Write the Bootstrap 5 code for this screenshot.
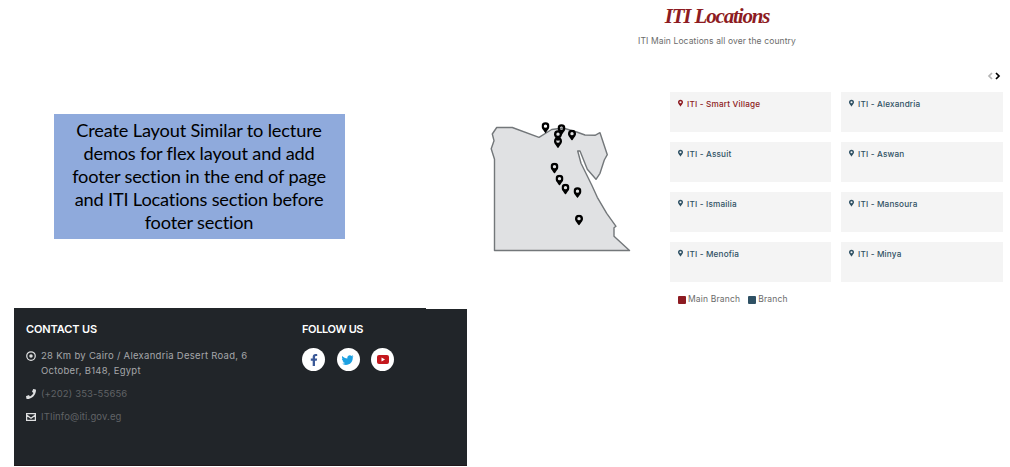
<!DOCTYPE html>
<html lang="en">
<head>
<meta charset="utf-8">
<meta name="viewport" content="width=device-width, initial-scale=1">
<title>ITI Locations</title>
<link href="https://cdn.jsdelivr.net/npm/bootstrap@5.3.0/dist/css/bootstrap.min.css" rel="stylesheet">
<style>
body{font-family:Inter,"Open Sans",sans-serif;background:#fff;overflow:hidden}
.page{width:1010px;height:467px}
.left-side{width:467px;padding-left:14px}
.brief{width:291px;height:125px;margin:114px 0 0 40px;background:#8faadc;color:#000;font:18.2px/23px Lato,sans-serif;letter-spacing:-.17px;padding:5px 1px 0 0}
.brief span{display:block;white-space:nowrap}
.site-footer{margin-top:69px;height:158px;background:#212529;border-bottom:1px solid #22171b;padding:14px 12px 0;clip-path:polygon(0 0,412px 0,412px 1px,100% 1px,100% 100%,0 100%)}
.site-footer h2{font-size:11px;line-height:15px;font-weight:600;color:#fff;margin:0;white-space:nowrap;letter-spacing:-.1px}
.site-footer .follow h2{letter-spacing:-.38px}
.contact{width:276px}
.contact li{font-size:9.5px;line-height:14.5px;letter-spacing:.28px;color:#a5a7a9;gap:5px;margin-bottom:8.5px;white-space:nowrap}
.contact li.dim{color:#606366;letter-spacing:.14px}
.contact svg{width:10px;height:10px;margin-top:2px;flex:none;color:#dedfe0}
.contact ul{margin-top:12px}
.social{gap:11.5px;margin-top:11px}
.social a{width:23px;height:23px;background:#fff}
.right-side{width:543px}
.title{width:500px;height:50px;padding-top:4px}
.title h1{font:italic bold 21px/24px "Liberation Serif",serif;letter-spacing:-1.15px;color:#8d1b22;margin:0}
.title p{font-size:8.5px;line-height:12px;letter-spacing:.12px;color:#6b6b6b;margin:7px 0 0}
.map{width:142px;height:132px;margin:71px 0 0 23px}
.listing{width:333px;margin:20px 0 0 38px}
.arrows{height:12px;margin-right:2px}
.places{grid-template-columns:161px 162px;gap:10px;margin-top:10px}
.place{height:40px;background:#f4f4f4;color:#2f5164;padding:6px 8px;font-size:8.2px;line-height:13px;letter-spacing:.17px;font-weight:500;gap:4px;white-space:nowrap}
.place.main{color:#8d1b22}
.place svg{width:5px;height:8px;margin-top:1px}
.legend{margin:11px 0 0 8px;gap:8px;font-size:8.5px;line-height:13px;letter-spacing:.17px;color:#6b6b6b}
.legend i{width:8px;height:8px;border-radius:1px;margin-right:2px}
.main-key{background:#8d1b22}
.branch-key{background:#2f5164}
</style>
</head>
<body>
<svg width="0" height="0" class="position-absolute"><defs>
<symbol id="pin" viewBox="0 0 384 512"><path fill="currentColor" fill-rule="evenodd" d="M172 502C27 291 0 270 0 192a192 192 0 1 1 384 0c0 78-27 99-172 310a24 24 0 0 1-40 0ZM192 272a80 80 0 1 0 0-160 80 80 0 0 0 0 160Z"/></symbol>
</defs></svg>
<main class="page d-flex">
<div class="left-side d-flex flex-column">
<div class="brief text-center">
<span>Create Layout Similar to lecture</span><span>demos for flex layout and add</span><span>footer section in the end of page</span><span>and ITI Locations section before</span><span>footer section</span>
</div>
<footer class="site-footer d-flex">
<section class="contact"><h2>CONTACT US</h2>
<ul class="list-unstyled mb-0">
<li class="d-flex"><svg viewBox="0 0 16 16"><circle cx="8" cy="8" r="6.8" fill="none" stroke="currentColor" stroke-width="2"/><circle cx="8" cy="8" r="2.8" fill="currentColor"/></svg><span>28 Km by Cairo / Alexandria Desert Road, 6<br>October, B148, Egypt</span></li>
<li class="d-flex dim"><svg viewBox="0 0 512 512"><path fill="currentColor" d="M493 25 389 1a24 24 0 0 0-27 14l-48 112a24 24 0 0 0 7 28l61 49a371 371 0 0 1-178 178l-49-61a24 24 0 0 0-28-7L15 362a24 24 0 0 0-14 27l24 104a24 24 0 0 0 23 19c257 0 464-208 464-464a24 24 0 0 0-19-23Z"/></svg><span>(+202) 353-55656</span></li>
<li class="d-flex dim"><svg viewBox="0 0 16 16"><path fill="none" stroke="currentColor" stroke-width="2" d="M1 2.500h14v11H1zM1 5l7 5 7-5"/></svg><span>ITIinfo@iti.gov.eg</span></li>
</ul></section>
<section class="follow"><h2>FOLLOW US</h2>
<div class="social d-flex">
<a class="rounded-circle d-flex align-items-center justify-content-center"><svg width="8" height="12" viewBox="0 0 320 512"><path fill="#3b5998" d="m279 288 14-93h-89v-60c0-25 12-50 52-50h41V7s-37-7-72-7c-73 0-121 44-121 125v70H23v93h81v224h100V288Z"/></svg></a>
<a class="rounded-circle d-flex align-items-center justify-content-center"><svg width="12" height="12" viewBox="0 0 512 512"><path fill="#1da1e2" d="M459 152v14c0 138-105 298-298 298-59 0-114-17-161-47 50 6 97-8 130-33-46-1-85-31-98-73 16 3 31 2 47-2-48-10-84-52-84-104 14 8 30 13 47 14C-4 187-11 127 13 80c52 64 130 105 217 110C214 110 272 48 333 48c30 0 57 12 76 33 24-4 47-13 67-25-8 25-24 45-46 58 21-2 42-8 60-16-14 21-32 39-31 54Z"/></svg></a>
<a class="rounded-circle d-flex align-items-center justify-content-center"><svg width="12" height="9" viewBox="0 0 24 18"><rect width="24" height="18" rx="4" fill="#c4171d"/><path fill="#fff" d="m9 5 7 4-7 4z"/></svg></a>
</div></section>
</footer>
</div>
<section class="right-side">
<div class="title text-center"><h1>ITI Locations</h1><p>ITI Main Locations all over the country</p></div>
<div class="d-flex align-items-start">
<svg class="map" viewBox="490 121 142 132">
<path fill="#e0e1e3" stroke="#73777a" stroke-width="1.4" stroke-linejoin="round" d="M496.700 127.500H512.300L539 137.300 551.700 129.500 563 128 576.700 132 585 135 595 135.300 600 132.700 607.300 154.700 604.300 160 600 173.300 596 179.300 587.300 169.300 580 151H577.700L581 163.300 591.700 185 597.300 197.300 606.700 213.300 616 226.300 614 227.700V236.300L629.500 250.500H494.500V159.300L491.200 148.700 494 140.700 492.300 134Z"/>
<g color="#000"><use href="#pin" x="541.500" y="122" width="8" height="11"/><use href="#pin" x="557.500" y="124" width="8" height="11"/><use href="#pin" x="554" y="130" width="8" height="11"/><use href="#pin" x="568" y="129.500" width="8" height="11"/><use href="#pin" x="554" y="137" width="8" height="11"/><use href="#pin" x="550.500" y="162.500" width="8" height="11"/><use href="#pin" x="555.500" y="174.500" width="8" height="11"/><use href="#pin" x="561.500" y="183.500" width="8" height="11"/><use href="#pin" x="573.500" y="187" width="8" height="11"/><use href="#pin" x="575" y="214.500" width="8" height="11"/></g>
</svg>
<div class="listing">
<div class="arrows d-flex justify-content-end align-items-center"><svg width="14" height="8" viewBox="0 0 14 8" fill="none" stroke-width="1.700"><path stroke="#b5b5b5" d="M5 1 2 4l3 3"/><path stroke="#000" d="m9 1 3 3-3 3"/></svg></div>
<div class="places d-grid">
<div class="place main d-flex"><svg><use href="#pin"/></svg><span>ITI - Smart Village</span></div>
<div class="place d-flex"><svg><use href="#pin"/></svg><span>ITI - Alexandria</span></div>
<div class="place d-flex"><svg><use href="#pin"/></svg><span>ITI - Assuit</span></div>
<div class="place d-flex"><svg><use href="#pin"/></svg><span>ITI - Aswan</span></div>
<div class="place d-flex"><svg><use href="#pin"/></svg><span>ITI - Ismailia</span></div>
<div class="place d-flex"><svg><use href="#pin"/></svg><span>ITI - Mansoura</span></div>
<div class="place d-flex"><svg><use href="#pin"/></svg><span>ITI - Menofia</span></div>
<div class="place d-flex"><svg><use href="#pin"/></svg><span>ITI - Minya</span></div>
</div>
<div class="legend d-flex"><span class="d-flex align-items-center"><i class="main-key"></i>Main Branch</span><span class="d-flex align-items-center"><i class="branch-key"></i>Branch</span></div>
</div>
</div>
</section>
</main>
<script src="https://cdn.jsdelivr.net/npm/bootstrap@5.3.0/dist/js/bootstrap.bundle.min.js"></script>
</body>
</html>
